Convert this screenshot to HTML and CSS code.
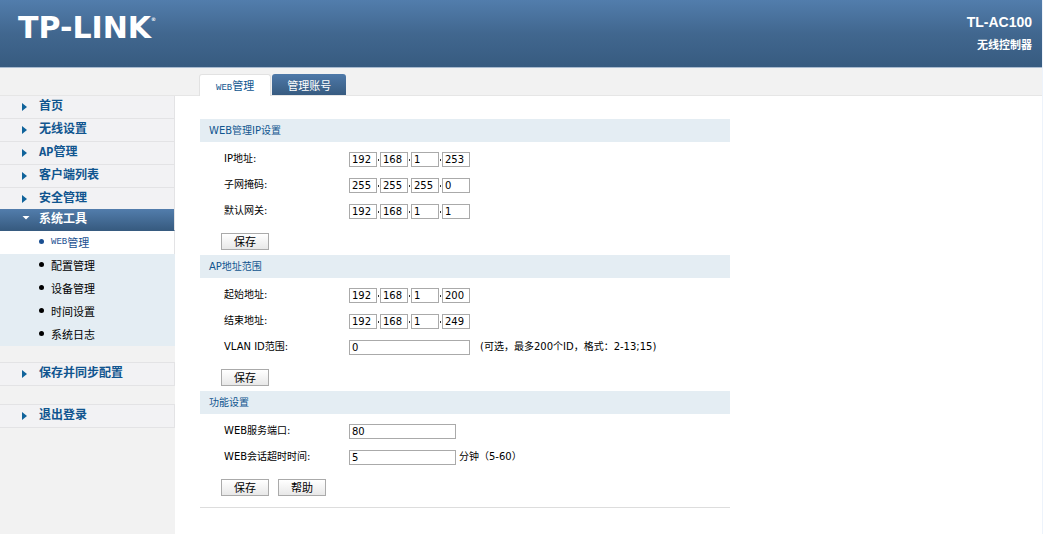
FILE: index.html
```html
<!DOCTYPE html>
<html lang="zh-CN">
<head>
<meta charset="utf-8">
<title>TL-AC100</title>
<link rel="stylesheet" href="styles.css">
</head>
<body>
<header class="header">
  <div class="logo">TP-LINK<span class="logo-mark">®</span></div>
  <div class="product">
    <div class="model">TL-AC100</div>
    <div class="model-desc">无线控制器</div>
  </div>
</header>
<div class="tabs">
  <a class="tab tab-current" href="#web"><span class="latin">WEB</span>管理</a>
  <a class="tab" href="#account">管理账号</a>
</div>
<div class="layout">
  <nav class="sidebar">
    <a class="menu" href="#home">首页</a>
    <a class="menu" href="#wireless">无线设置</a>
    <a class="menu" href="#ap">AP管理</a>
    <a class="menu" href="#clients">客户端列表</a>
    <a class="menu" href="#security">安全管理</a>
    <a class="menu menu-open" href="#tools">系统工具</a>
    <div class="submenu">
      <a class="sub sub-current" href="#web"><span class="latin">WEB</span>管理</a>
      <a class="sub" href="#config">配置管理</a>
      <a class="sub" href="#device">设备管理</a>
      <a class="sub" href="#time">时间设置</a>
      <a class="sub" href="#log">系统日志</a>
    </div>
    <a class="menu menu-apart" href="#sync">保存并同步配置</a>
    <a class="menu menu-apart" href="#logout">退出登录</a>
  </nav>
  <main class="content">
    <form class="section">
      <h2 class="title">WEB管理IP设置</h2>
      <div class="rows">
        <div class="row"><label class="name" for="ip">IP地址:</label>
          <div class="ip"><input id="ip" class="octet" value="192"><span class="dot"></span><input class="octet" aria-label="IP地址 2" value="168"><span class="dot"></span><input class="octet" aria-label="IP地址 3" value="1"><span class="dot"></span><input class="octet" aria-label="IP地址 4" value="253"></div></div>
        <div class="row"><label class="name" for="mask">子网掩码:</label>
          <div class="ip"><input id="mask" class="octet" value="255"><span class="dot"></span><input class="octet" aria-label="子网掩码 2" value="255"><span class="dot"></span><input class="octet" aria-label="子网掩码 3" value="255"><span class="dot"></span><input class="octet" aria-label="子网掩码 4" value="0"></div></div>
        <div class="row"><label class="name" for="gateway">默认网关:</label>
          <div class="ip"><input id="gateway" class="octet" value="192"><span class="dot"></span><input class="octet" aria-label="默认网关 2" value="168"><span class="dot"></span><input class="octet" aria-label="默认网关 3" value="1"><span class="dot"></span><input class="octet" aria-label="默认网关 4" value="1"></div></div>
      </div>
      <div class="actions"><button class="button" type="button">保存</button></div>
    </form>
    <form class="section">
      <h2 class="title">AP地址范围</h2>
      <div class="rows">
        <div class="row"><label class="name" for="start">起始地址:</label>
          <div class="ip"><input id="start" class="octet" value="192"><span class="dot"></span><input class="octet" aria-label="起始地址 2" value="168"><span class="dot"></span><input class="octet" aria-label="起始地址 3" value="1"><span class="dot"></span><input class="octet" aria-label="起始地址 4" value="200"></div></div>
        <div class="row"><label class="name" for="end">结束地址:</label>
          <div class="ip"><input id="end" class="octet" value="192"><span class="dot"></span><input class="octet" aria-label="结束地址 2" value="168"><span class="dot"></span><input class="octet" aria-label="结束地址 3" value="1"><span class="dot"></span><input class="octet" aria-label="结束地址 4" value="249"></div></div>
        <div class="row"><label class="name" for="vlan">VLAN ID范围:</label>
          <input id="vlan" class="field field-wide" value="0"><span class="hint hint-apart">(可选，最多200个ID，格式：2-13;15)</span></div>
      </div>
      <div class="actions"><button class="button" type="button">保存</button></div>
    </form>
    <form class="section section-last">
      <h2 class="title">功能设置</h2>
      <div class="rows">
        <div class="row"><label class="name" for="port">WEB服务端口:</label>
          <input id="port" class="field" value="80"></div>
        <div class="row"><label class="name" for="timeout">WEB会话超时时间:</label>
          <input id="timeout" class="field" value="5"><span class="hint">分钟（5-60）</span></div>
      </div>
      <div class="actions"><button class="button" type="button">保存</button><button class="button" type="button">帮助</button></div>
    </form>
  </main>
</div>
</body>
</html>
```

FILE: styles.css
```css
* { box-sizing: border-box; }

body {
  margin: 0;
  min-height: 100vh;
  display: flex;
  flex-direction: column;
  border-right: 1px solid #edf3fb;
  background: #f2f2f2;
  color: #000;
  font: 10px/20px "DejaVu Sans", "Noto Sans CJK SC", sans-serif;
}

a { text-decoration: none; }

.header {
  display: flex;
  justify-content: space-between;
  height: 68px;
  padding: 11px 10px 0 18px;
  border-bottom: 1px solid #a9bbd0;
  background: linear-gradient(#527dac, #41678f 50%, #375b80);
  color: #fff;
}

.logo {
  display: flex;
  font: bold 30px/34px "DejaVu Sans", sans-serif;
}

.logo-mark {
  font-size: 5px;
  line-height: 16px;
}

.product { text-align: right; }

.model { font: bold 14px/22px "Liberation Sans", Arial, sans-serif; }

.model-desc { font: bold 11px/22px "Noto Sans CJK SC", sans-serif; }

.tabs {
  display: flex;
  gap: 1px;
  height: 28px;
  padding: 6px 0 0 199px;
  border-bottom: 1px solid #e6e6e6;
}

.tab {
  padding: 0 15px;
  border-radius: 3px 3px 0 0;
  background: linear-gradient(#4e79a9, #375b80);
  color: #fff;
  font: 11px/22px "Noto Sans CJK SC", sans-serif;
}

.tab-current {
  height: 22px;
  padding: 0 16px;
  border: 1px solid #e2e2e2;
  border-bottom: 0;
  background: #fff;
  color: #10558f;
  line-height: 20px;
}

.latin { font: 9px "Liberation Mono", monospace; }

.layout {
  display: flex;
  flex: 1;
}

.sidebar {
  width: 175px;
  flex: none;
}

.menu {
  display: flex;
  align-items: center;
  height: 23px;
  padding-left: 22px;
  border: solid #e3e3e5;
  border-width: 0 1px 1px 0;
  background: #f2f2f4;
  color: #10558f;
  font: bold 12px/22px "Liberation Mono", "Noto Sans CJK SC", monospace;
  line-height: 24px;
}

.menu::before {
  content: "";
  width: 5px;
  height: 8px;
  margin-right: 12px;
  background: #10639b;
  clip-path: polygon(0 0, 100% 50%, 0 100%);
}

.menu-open {
  height: 22px;
  margin-top: -2px;
  border-bottom-color: #375b80;
  background: linear-gradient(#527dac, #375b80);
  color: #fff;
}

.menu-open::before {
  width: 8px;
  height: 4px;
  margin: 0 9px 4px 0;
  background: #fff;
  clip-path: polygon(0 0, 100% 0, 50% 100%);
}

.submenu { background: #e4edf3; }

.sub {
  display: flex;
  align-items: center;
  height: 23px;
  padding: 0 0 2px 39px;
  color: #000;
  font: 11px/20px "Noto Sans CJK SC", sans-serif;
}

.sub::before {
  content: "";
  width: 5px;
  height: 5px;
  margin-right: 7px;
  border-radius: 50%;
  background: currentColor;
}

.sub-current {
  border-right: 1px solid #e3e3e5;
  background: #fff;
  color: #1a4f91;
}

.menu-apart {
  height: 24px;
  margin: 16px 0 18px;
  border-top-width: 1px;
}

.content {
  flex: 1;
  padding: 23px 312px 25px 25px;
  background: #fff;
}

.section {
  padding-bottom: 5px;
}

.section-last {
  padding-bottom: 11px;
  border-bottom: 1px solid #ddd;
}

.title {
  margin: 0;
  padding-left: 9px;
  background: #e4edf3;
  color: #10558f;
  font-size: 10px;
  font-weight: normal;
  line-height: 23px;
}

.rows { padding: 4px 0 9px 24px; }

.row {
  display: flex;
  align-items: center;
  height: 26px;
  line-height: 22px;
  white-space: nowrap;
}

.name {
  width: 125px;
  flex: none;
}

.ip {
  display: flex;
  align-items: center;
}

.octet,
.field {
  width: 28px;
  height: 15px;
  padding: 0 2px;
  border: 1px solid #aaa;
  background: #fff;
  color: #000;
  font: 10px/13px "DejaVu Sans", sans-serif;
}

.field { width: 107px; }

.field-wide { width: 121px; }

.dot {
  width: 1px;
  height: 2px;
  margin: 2px 1px 0;
  background: #333;
}

.hint { margin-left: 3px; }

.hint-apart { margin-left: 10px; }

.actions {
  display: flex;
  gap: 9px;
  padding-left: 21px;
}

.button {
  width: 48px;
  height: 17px;
  padding: 0;
  border: 1px solid #aaa;
  background: linear-gradient(#fff, #e8e8e8);
  color: #000;
  font: 11px/15px "Noto Sans CJK SC", sans-serif;
}
```
